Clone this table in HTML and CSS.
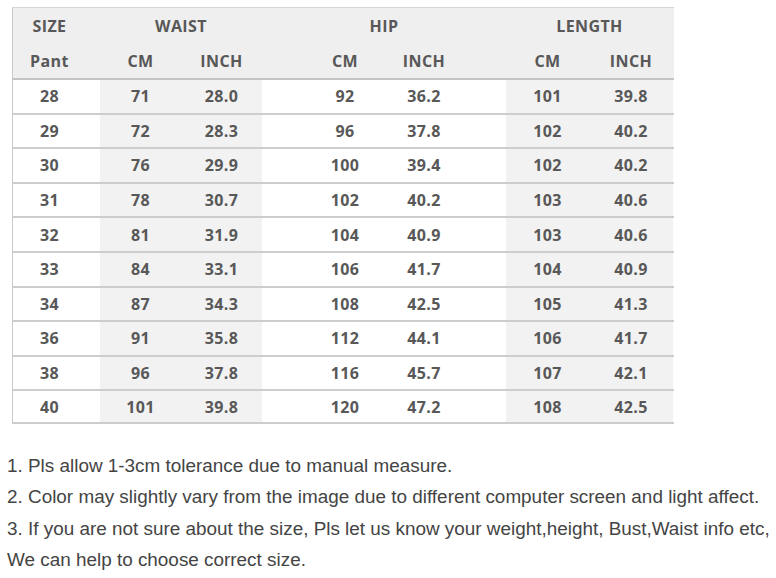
FILE: index.html
```html
<!DOCTYPE html>
<html>
<head>
<meta charset="utf-8">
<link rel="stylesheet" href="styles.css">
</head>
<body>
<div class="chart">
  <div class="row head">
    <div class="c pl">SIZE</div>
    <div class="c span2">WAIST</div>
    <div class="c span2">HIP</div>
    <div class="c span2">LENGTH</div>
  </div>
  <div class="row head">
    <div class="c pl">Pant</div>
    <div class="c">CM</div>
    <div class="c">INCH</div>
    <div class="c hr">CM</div>
    <div class="c hl">INCH</div>
    <div class="c">CM</div>
    <div class="c">INCH</div>
  </div>
  <div class="row data"><div class="c pl">28</div><div class="c g">71</div><div class="c g">28.0</div><div class="c hr">92</div><div class="c hl">36.2</div><div class="c g">101</div><div class="c g">39.8</div></div>
  <div class="row data"><div class="c pl">29</div><div class="c g">72</div><div class="c g">28.3</div><div class="c hr">96</div><div class="c hl">37.8</div><div class="c g">102</div><div class="c g">40.2</div></div>
  <div class="row data"><div class="c pl">30</div><div class="c g">76</div><div class="c g">29.9</div><div class="c hr">100</div><div class="c hl">39.4</div><div class="c g">102</div><div class="c g">40.2</div></div>
  <div class="row data"><div class="c pl">31</div><div class="c g">78</div><div class="c g">30.7</div><div class="c hr">102</div><div class="c hl">40.2</div><div class="c g">103</div><div class="c g">40.6</div></div>
  <div class="row data"><div class="c pl">32</div><div class="c g">81</div><div class="c g">31.9</div><div class="c hr">104</div><div class="c hl">40.9</div><div class="c g">103</div><div class="c g">40.6</div></div>
  <div class="row data"><div class="c pl">33</div><div class="c g">84</div><div class="c g">33.1</div><div class="c hr">106</div><div class="c hl">41.7</div><div class="c g">104</div><div class="c g">40.9</div></div>
  <div class="row data"><div class="c pl">34</div><div class="c g">87</div><div class="c g">34.3</div><div class="c hr">108</div><div class="c hl">42.5</div><div class="c g">105</div><div class="c g">41.3</div></div>
  <div class="row data"><div class="c pl">36</div><div class="c g">91</div><div class="c g">35.8</div><div class="c hr">112</div><div class="c hl">44.1</div><div class="c g">106</div><div class="c g">41.7</div></div>
  <div class="row data"><div class="c pl">38</div><div class="c g">96</div><div class="c g">37.8</div><div class="c hr">116</div><div class="c hl">45.7</div><div class="c g">107</div><div class="c g">42.1</div></div>
  <div class="row data last"><div class="c pl">40</div><div class="c g">101</div><div class="c g">39.8</div><div class="c hr">120</div><div class="c hl">47.2</div><div class="c g">108</div><div class="c g">42.5</div></div>
</div>
<div class="notes">
  <p>1. Pls allow 1-3cm tolerance due to manual measure.</p>
  <p>2. Color may slightly vary from the image due to different computer screen and light affect.</p>
  <p>3. If you are not sure about the size, Pls let us know your weight,height, Bust,Waist info etc,</p>
  <p>We can help to choose correct size.</p>
</div>
</body>
</html>
```
FILE: styles.css
```css
html, body {
  margin: 0;
  padding: 0;
  background: #ffffff;
}
body {
  width: 776px;
  height: 578px;
  overflow: hidden;
}
.chart {
  margin: 7px 0 0 12px;
  width: 661px;
  border-top: 1px solid #d6d6d6;
  border-left: 1px solid #c9c9c9;
  font-family: "Open Sans", "DejaVu Sans", sans-serif;
  font-weight: 700;
  font-size: 16px;
  letter-spacing: 0.4px;
  color: #585858;
}
.row {
  display: grid;
  grid-template-columns: 87px 81px 81px 122px 122px 83px 84px;
  box-sizing: border-box;
}
.head {
  height: 35px;
  background: #efefef;
}
.head + .data {
  border-top: 2px solid #c4c4c4;
}
.data {
  height: 34.6px;
  border-top: 2px solid #cdcdcd;
}
.data.last {
  border-bottom: 2px solid #cdcdcd;
}
.c {
  display: flex;
  align-items: center;
  justify-content: center;
}
.span2 {
  grid-column: span 2;
}
.pl {
  padding-right: 14px;
}
.hr {
  padding-left: 44px;
}
.hl {
  padding-right: 42px;
}
.g {
  background: #f2f2f2;
}
.notes {
  margin: 26px 0 0 7px;
  font-family: "Liberation Sans", Arial, sans-serif;
  font-size: 18.9px;
  color: #444444;
}
.notes p {
  margin: 0;
  line-height: 31.5px;
  white-space: nowrap;
}
```
